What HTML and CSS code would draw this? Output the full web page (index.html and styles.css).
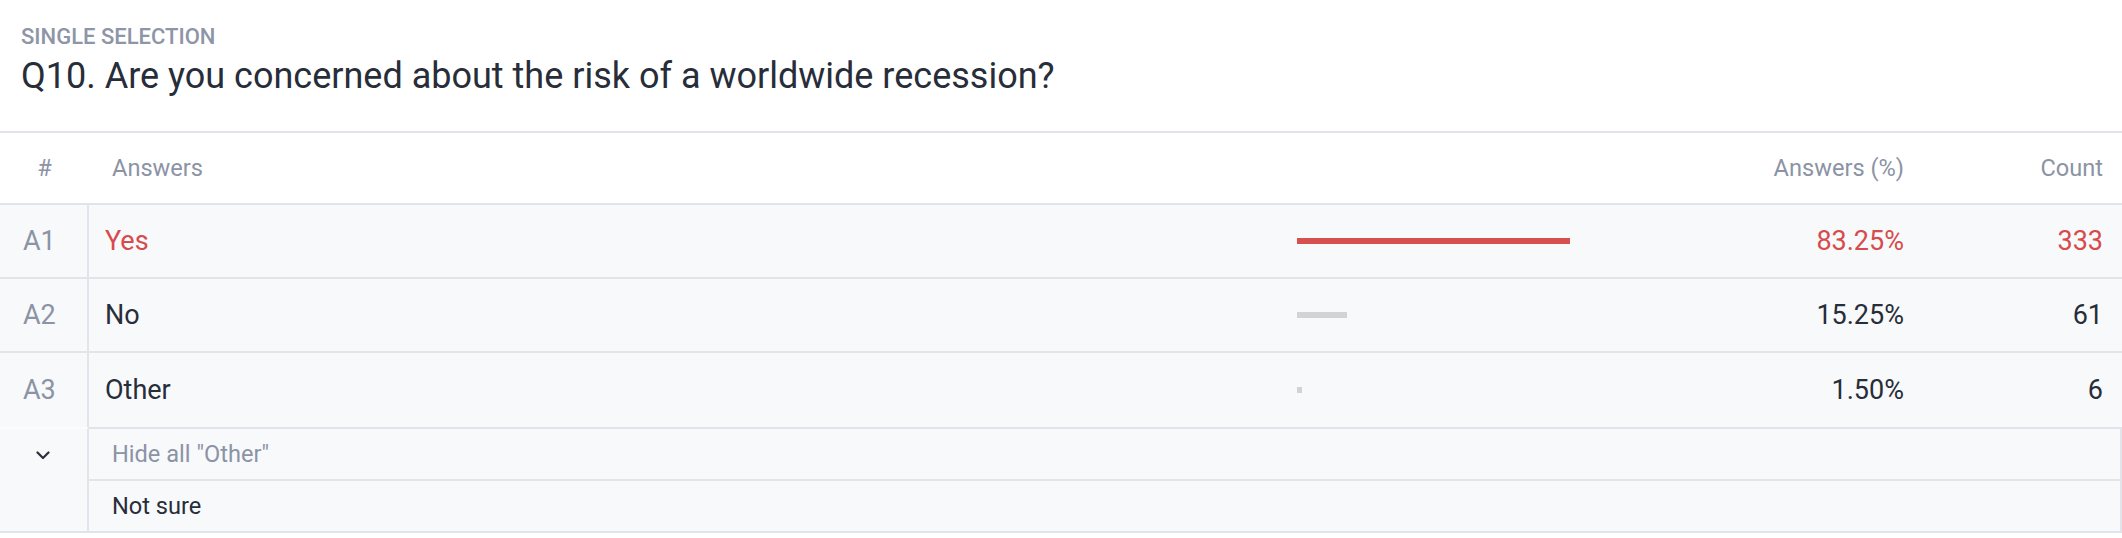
FILE: index.html
```html
<!DOCTYPE html>
<html lang="en">
<head>
<meta charset="utf-8">
<title>Q10 results</title>
<link rel="stylesheet" href="styles.css">
</head>
<body>
<section class="question">
  <div class="q-type">Single selection</div>
  <h1 class="q-title">Q10. Are you concerned about the risk of a worldwide recession?</h1>
</section>
<div class="results">
  <div class="row head">
    <div class="cell c-num">#</div>
    <div class="cell c-ans">Answers</div>
    <div class="cell c-bar"></div>
    <div class="cell c-pct">Answers (%)</div>
    <div class="cell c-cnt">Count</div>
  </div>
  <div class="row data top">
    <div class="cell c-num">A1</div>
    <div class="cell c-ans">Yes</div>
    <div class="cell c-bar"><span class="bar" style="width:83.25%"></span></div>
    <div class="cell c-pct">83.25%</div>
    <div class="cell c-cnt">333</div>
  </div>
  <div class="row data">
    <div class="cell c-num">A2</div>
    <div class="cell c-ans">No</div>
    <div class="cell c-bar"><span class="bar" style="width:15.25%"></span></div>
    <div class="cell c-pct">15.25%</div>
    <div class="cell c-cnt">61</div>
  </div>
  <div class="row data has-other">
    <div class="cell c-num">A3</div>
    <div class="cell c-ans">Other</div>
    <div class="cell c-bar"><span class="bar" style="width:1.5%"></span></div>
    <div class="cell c-pct">1.50%</div>
    <div class="cell c-cnt">6</div>
  </div>
  <div class="other">
    <div class="other-toggle">
      <span class="chev-wrap">
        <svg class="chev" width="14" height="9" viewBox="0 0 14 9" aria-hidden="true"><path d="M1.5 1.5 L7 7 L12.5 1.5" fill="none" stroke="#2a303b" stroke-width="2.2" stroke-linecap="round" stroke-linejoin="round"/></svg>
      </span>
    </div>
    <div class="other-list">
      <div class="other-item muted">Hide all "Other"</div>
      <div class="other-item">Not sure</div>
    </div>
  </div>
</div>
</body>
</html>
```
FILE: styles.css
```css
* { box-sizing: border-box; }
body {
  margin: 0;
  background: #ffffff;
  font-family: Roboto, "Liberation Sans", Arial, sans-serif;
  color: #272d39;
}
.question {
  padding: 25px 21px 34px;
}
.q-type {
  font-size: 22px;
  line-height: 24px;
  font-weight: 500;
  text-transform: uppercase;
  color: #8d95a6;
  margin-bottom: 6px;
}
.q-title {
  margin: 0;
  font-size: 36px;
  line-height: 42px;
  font-weight: 400;
  color: #272d39;
}
.results {
  border-top: 2px solid #e1e5eb;
}
.row {
  display: grid;
  grid-template-columns: 89px 1fr 328px 279px 218px;
}
.cell {
  display: flex;
  align-items: center;
  white-space: nowrap;
}
.head {
  background: #ffffff;
  border-bottom: 2px solid #e1e5eb;
  font-size: 23.6px;
  color: #8b93a5;
}
.head .cell { height: 70px; }
.head .c-num { justify-content: center; }
.head .c-ans { padding-left: 23px; }

.data {
  background: #f8f9fb;
  font-size: 27px;
}
.data .cell {
  height: 74px;
  border-bottom: 2px solid #e1e5eb;
}
.has-other .cell { height: 76px; }
.data .c-num {
  border-right: 2px solid #e1e5eb;
  padding-left: 23px;
  color: #8b93a5;
}
.data .c-ans { padding-left: 16px; }
.c-pct { justify-content: flex-end; }
.c-cnt { justify-content: flex-end; padding-right: 19px; }
.bar {
  display: block;
  height: 6px;
  background: #d3d3d3;
}
.top .c-ans, .top .c-pct, .top .c-cnt { color: #d64b4b; }
.top .bar { background: #d65050; }
.has-other .c-num { border-bottom-color: #fbfcfd; }

.other {
  display: grid;
  grid-template-columns: 89px 1fr;
  background: #f8f9fb;
  border-bottom: 2px solid #e1e5eb;
}
.other-toggle {
  border-right: 2px solid #e1e5eb;
}
.chev-wrap {
  height: 52px;
  display: flex;
  align-items: center;
  justify-content: center;
  padding-right: 2px;
}
.other-list {
  border-right: 2px solid #e1e5eb;
}
.other-item {
  height: 52px;
  display: flex;
  align-items: center;
  padding-left: 23px;
  font-size: 23.6px;
  color: #272d39;
  border-bottom: 2px solid #e1e5eb;
}
.other-item:last-child { border-bottom: none; height: 50px; }
.other-item.muted { color: #8b93a5; }
```
